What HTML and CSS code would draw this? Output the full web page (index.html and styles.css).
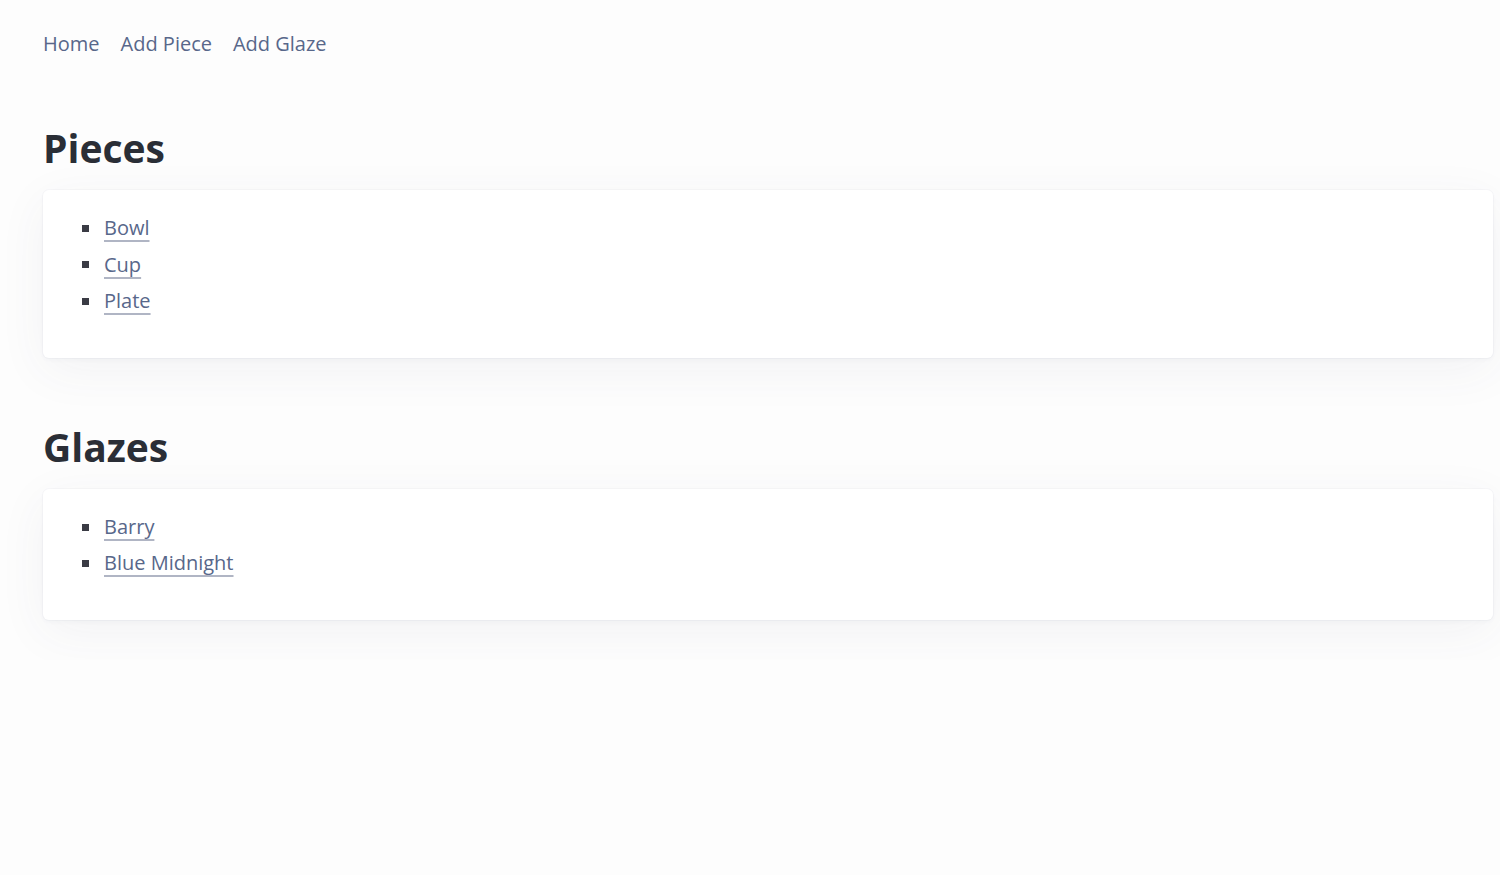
FILE: index.html
```html
<!DOCTYPE html>
<html>
<head>
<meta charset="utf-8">
<link rel="stylesheet" href="styles.css">
</head>
<body>
<nav class="nav">
  <a href="#">Home</a>
  <a href="#">Add Piece</a>
  <a href="#">Add Glaze</a>
</nav>
<main class="main">
  <section class="section">
    <h1 class="title">Pieces</h1>
    <div class="card">
      <ul class="list">
        <li><a href="#">Bowl</a></li>
        <li><a href="#">Cup</a></li>
        <li><a href="#">Plate</a></li>
      </ul>
    </div>
  </section>
  <section class="section">
    <h1 class="title">Glazes</h1>
    <div class="card">
      <ul class="list">
        <li><a href="#">Barry</a></li>
        <li><a href="#">Blue Midnight</a></li>
      </ul>
    </div>
  </section>
</main>
</body>
</html>
```
FILE: styles.css
```css
html, body {
  margin: 0;
  padding: 0;
  background: #fdfdfd;
  font-family: "Open Sans", "Noto Sans", sans-serif;
}
body {
  padding: 29px 7px 40px 43px;
}
.nav {
  display: flex;
  gap: 21px;
  font-size: 20px;
  line-height: 30px;
}
.nav a {
  color: #58678a;
  text-decoration: none;
}
.section {
  margin-top: 65px;
}
.title {
  margin: 0 0 18px 0;
  font-size: 39px;
  line-height: 48px;
  font-weight: 700;
  color: #2a2e36;
}
.card {
  background: #ffffff;
  border-radius: 6px;
  box-shadow: 0 0 0 1px rgba(40, 50, 80, 0.025), 0 2px 4px rgba(40, 50, 80, 0.03), 0 12px 50px rgba(60, 70, 110, 0.06);
  padding: 20px 0 38px 0;
}
.list {
  margin: 0;
  padding: 0 0 0 39px;
  list-style: none;
  font-size: 20px;
  line-height: 36.6px;
  color: #3a3b44;
}
.list li {
  display: flex;
  align-items: center;
  gap: 15px;
}
.list li::before {
  content: "";
  width: 7px;
  height: 7px;
  background: #3a3b44;
  flex: none;
}
.list a {
  color: #58678a;
  text-decoration: underline;
  text-decoration-color: #b0b5c4;
  text-underline-offset: 5px;
  text-decoration-thickness: 2px;
}
```
